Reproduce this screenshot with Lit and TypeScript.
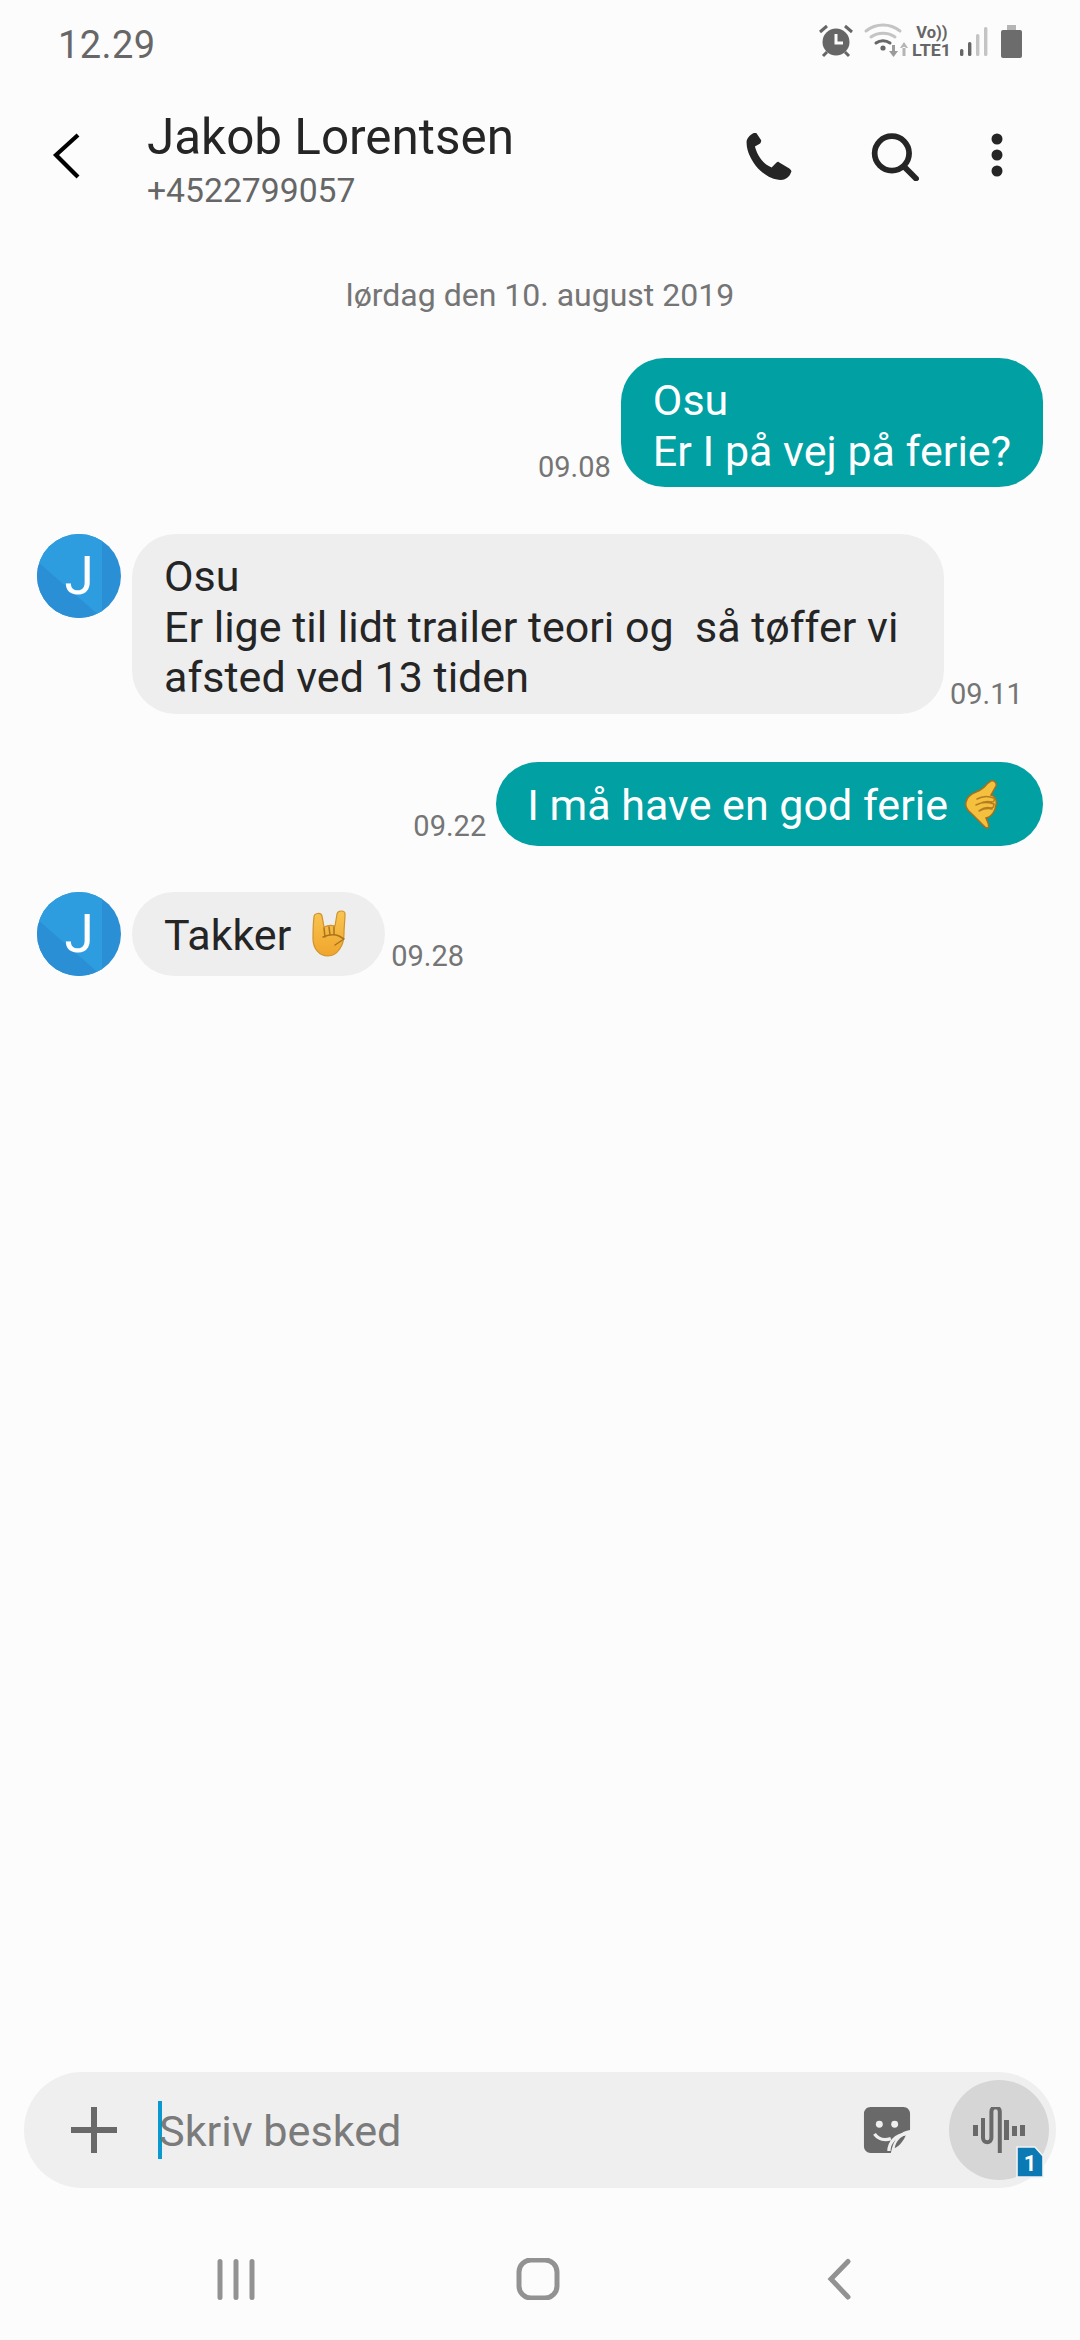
import { LitElement, html, css, svg } from "lit";
import { customElement } from "lit/decorators.js";

const callHand = html`<svg class="emoji call" viewBox="0 0 32 49" width="32" height="49">
  <path d="M26 1c3-1 6 2 5 5l-5 9c4 1 6 5 5 10-1 6-4 10-7 12l-3 1 2 5c1 3 1 5-1 5s-4-3-8-7l-8-8c-4-3-6-7-5-11 1-5 5-8 10-10 5-2 8-4 11-8z" fill="#f6c03f" stroke="#a5701c" stroke-width="1.500"/>
  <path d="M12 19c5-3 12-3 17-1 1 2 0 4-2 4-5-1-10 0-13 2M11 25c5-3 12-3 18-1 0 3-1 4-3 4-4-1-8 0-11 2M14 31c4-2 9-3 13-2" fill="none" stroke="#b27c20" stroke-width="1.500" stroke-linecap="round"/>
</svg>`;

const hornsHand = html`<svg class="emoji horns" viewBox="0 0 34 47" width="34" height="47">
  <defs><linearGradient id="skin" x1="0" y1="0" x2="0" y2="1"><stop offset="0" stop-color="#f8c552"/><stop offset="1" stop-color="#f0a52c"/></linearGradient></defs>
  <path d="M2 7c0-4 7-5 8-1l2 11c4-2 8-2 11-1l2-12c1-4 8-4 8 0 0 7-1 12-1 20 0 12-7 22-16 22C7 46 1 38 1 29 1 21 1 14 2 7z" fill="url(#skin)" stroke="#d2932c" stroke-width="1.200"/>
  <path d="M12 18l1 9M17 17l1 8M22 17l0 7M11 27c5-2 11-3 16-1l5 3-9 6" fill="none" stroke="#a9741c" stroke-width="1.500" stroke-linecap="round" stroke-linejoin="round"/>
</svg>`;

@customElement("app-root")
export class AppRoot extends LitElement {
  static styles = css`
    :host {
      display: block;
      width: 1080px;
      height: 2340px;
      background: #fcfcfc;
      font-family: Roboto, "Liberation Sans", sans-serif;
      color: #252525;
      overflow: hidden;
    }
    .page { display: flex; flex-direction: column; height: 2340px; }

    /* status bar */
    .status { height: 84px; flex: none; display: flex; justify-content: space-between; padding: 23px 54px 0 58px; box-sizing: border-box; }
    .clock { font-size: 38px; line-height: 44px; color: #676767; letter-spacing: 0.4px; }
    .status-icons { display: block; }

    /* header */
    .header { height: 125px; flex: none; display: flex; align-items: flex-start; }
    .back { margin: 47px 0 0 52px; flex: none; }
    .who { margin-left: 65px; flex: 1; padding-top: 26px; }
    .name { font-size: 49.400px; line-height: 54px; }
    .phone { font-size: 33.700px; line-height: 38px; color: #666; margin-top: 8px; }
    .actions { display: flex; flex: none; margin-top: 49px; }
    .actions svg { display: block; }

    /* conversation */
    .thread { flex: 1; display: flex; flex-direction: column; padding: 0 37px; }
    .date { text-align: center; font-size: 32px; line-height: 38px; color: #757575; margin-top: 67px; }
    .row { display: flex; align-items: flex-end; }
    .row.out { justify-content: flex-end; }
    .row.in { align-items: flex-start; }
    .bubble { font-size: 43px; line-height: 50.500px; box-sizing: border-box; padding: 17px 32px 11px; border-radius: 44px; white-space: pre; }
    .out .bubble { background: #00a0a3; color: #fff; }
    .in .bubble { background: #eeeeee; color: #252525; margin-left: 11px; }
    .single { display: flex; align-items: center; height: 84px; padding-top: 4px; padding-bottom: 0; border-radius: 42px; }
    .emoji { flex: none; display: block; }
    .emoji.call { margin-left: 17px; margin-right: 14px; margin-top: -2px; }
    .emoji.horns { margin-left: 21px; margin-right: 6px; margin-top: -4px; }
    .time { font-size: 29px; line-height: 34px; color: #757575; flex: none; }
    .out .time { margin-right: 10px; padding-bottom: 3px; }
    .in .time { margin-left: 6px; align-self: flex-end; padding-bottom: 3px; }
    .avatar { width: 84px; height: 84px; flex: none; display: block; }
    .avatar-wrap { position: relative; width: 84px; height: 84px; flex: none; }
    .avatar-letter { position: absolute; inset: 0; display: flex; align-items: center; justify-content: center; color: #fff; font-size: 53px; font-weight: 400; }

    /* composer */
    .composer { flex: none; margin: 0 24px; height: 116px; border-radius: 58px; background: #efefef; display: flex; align-items: center; }
    .plus { margin-left: 46px; flex: none; display: block; }
    .caret { width: 4px; height: 58px; background: #0a98d0; margin-left: 40px; flex: none; }
    .hint { font-size: 43.200px; color: #7b7b7b; flex: 1; line-height: 58px; margin-left: -3px; padding-top: 3px; }
    .sticker { display: block; flex: none; margin-right: 38px; }
    .mic { width: 100px; height: 100px; border-radius: 50%; background: #d6d6d6; flex: none; margin-right: 7px; display: flex; align-items: center; justify-content: center; position: relative; }
    .sim { position: absolute; right: 5px; bottom: 2px; display: block; }
    .sim-digit { font: 700 22px Roboto, sans-serif; fill: #fff; }

    /* navigation bar */
    .nav { flex: none; height: 152px; display: flex; justify-content: center; align-items: flex-start; padding: 70px 4px 0 0; box-sizing: border-box; }
    .nav svg { display: block; }
    .nav-slot { width: 302px; display: flex; justify-content: center; }

    .sb-text { font: 700 16.500px Roboto, sans-serif; fill: #666; }
  `;

  private avatar() {
    return html`<div class="avatar-wrap">
      <svg class="avatar" viewBox="0 0 84 84">
        <defs><clipPath id="disc"><circle cx="42" cy="42" r="42"/></clipPath></defs>
        <g clip-path="url(#disc)">
          <rect width="84" height="84" fill="#2b8fd6"/>
          <path d="M0 0H65V84L0 27z" fill="#2e9ddf"/>
          <path d="M0 28L60 84H0z" fill="#2b8fd6"/>
        </g>
      </svg>
      <span class="avatar-letter">J</span>
    </div>`;
  }

  render() {
    return html`<div class="page">
      <div class="status">
        <span class="clock">12.29</span>
        <svg class="status-icons" width="210" height="40" viewBox="0 0 210 40">
          ${svg`
          <circle cx="20" cy="19" r="13.500" fill="#666"/>
          <path d="M20 11v9h7" fill="none" stroke="#fcfcfc" stroke-width="3"/>
          <path d="M4 9l7-6M29 3l7 6M7 33l4-4M33 33l-4-4" stroke="#666" stroke-width="3"/>
          <g fill="none" stroke-linecap="round">
            <path d="M50 8c10-8 24-8 34 0" stroke="#c4c4c4" stroke-width="3"/>
            <path d="M55 14c7-5 17-5 24 0" stroke="#c4c4c4" stroke-width="3"/>
            <path d="M60 20c4-3 10-3 14 0" stroke="#666" stroke-width="3"/>
          </g>
          <circle cx="67" cy="25" r="2.600" fill="#666"/>
          <path d="M73 28h9l-4.500 6zM76 22h3v7h-3z" fill="#9b9b9b"/>
          <path d="M84 25h8l-4-6zM86.500 24h3v9h-3z" fill="#b5b5b5"/>
          <text class="sb-text" x="116" y="15" text-anchor="middle">Vo))</text>
          <text class="sb-text" x="96" y="33" textLength="39" lengthAdjust="spacingAndGlyphs">LTE1</text>
          <rect x="144" y="26" width="3.400" height="7" rx="1.500" fill="#666"/>
          <rect x="152" y="19" width="3.400" height="14" rx="1.500" fill="#666"/>
          <rect x="160" y="11" width="3.400" height="22" rx="1.500" fill="#c4c4c4"/>
          <rect x="168" y="4" width="3.400" height="29" rx="1.500" fill="#c4c4c4"/>
          <path d="M191 2h9v5h-9z" fill="#b5b5b5"/>
          <rect x="185" y="7" width="21" height="28" rx="2" fill="#6c6c6c"/>
          `}
        </svg>
      </div>

      <div class="header">
        <svg class="back" width="30" height="50" viewBox="0 0 30 50">
          <path d="M26 4L4 24 26 46" fill="none" stroke="#000" stroke-width="4.200"/>
        </svg>
        <div class="who">
          <div class="name">Jakob Lorentsen</div>
          <div class="phone">+4522799057</div>
        </div>
        <div class="actions">
          <svg width="48" height="48" viewBox="2.500 1 44 46" style="margin-right:78px">
            <path d="M10 1c-4 2-7 5-7 9 0 9 5 18 11 25 7 7 14 11 22 11 4 0 8-3 9-6l1-2c0-1-1-2-2-3l-10-6c-1-1-2 0-3 1l-4 4c-5-2-9-6-11-9s-4-7-5-11l5-3c1-1 1-2 1-3L13 2c-1-2-2-2-3-1z" fill="#252525"/>
          </svg>
          <svg width="48" height="48" viewBox="1 0.500 46 46" style="margin-right:72px">
            <circle cx="21" cy="20" r="16.500" fill="none" stroke="#252525" stroke-width="5.500"/>
            <path d="M32 32l14 14" stroke="#252525" stroke-width="5.500"/>
          </svg>
          <svg width="12" height="46" viewBox="0 0 12 46" style="margin-right:77px">
            <circle cx="6" cy="6" r="5.500" fill="#252525"/>
            <circle cx="6" cy="22" r="5.500" fill="#252525"/>
            <circle cx="6" cy="38" r="5.500" fill="#252525"/>
          </svg>
        </div>
      </div>

      <div class="thread">
        <div class="date">lørdag den 10. august 2019</div>

        <div class="row out" style="margin-top:44px">
          <span class="time">09.08</span>
          <div class="bubble">Osu
Er I på vej på ferie?</div>
        </div>

        <div class="row in" style="margin-top:47px">
          ${this.avatar()}
          <div class="bubble" style="width:812px">Osu
Er lige til lidt trailer teori og  så tøffer vi
afsted ved 13 tiden</div>
          <span class="time">09.11</span>
        </div>

        <div class="row out" style="margin-top:48px">
          <span class="time">09.22</span>
          <div class="bubble single" style="padding-left:31px">I må have en god ferie${callHand}</div>
        </div>

        <div class="row in" style="margin-top:46px">
          ${this.avatar()}
          <div class="bubble single" style="padding-right:33px">Takker${hornsHand}</div>
          <span class="time">09.28</span>
        </div>
      </div>

      <div class="composer">
        <svg class="plus" width="48" height="48" viewBox="0 0 48 48">
          <path d="M24 1v46M1 24h46" stroke="#696969" stroke-width="6"/>
        </svg>
        <span class="caret"></span>
        <span class="hint">Skriv besked</span>
        <svg class="sticker" width="48" height="48" viewBox="0 0 50 50">
          <path d="M8 1h34c4 0 7 3 7 7v17c-9 1-17 8-20 24H8c-4 0-7-3-7-7V8c0-4 3-7 7-7z" fill="#696969"/>
          <path d="M33 44c1-7 6-12 12-14-3 6-6 11-12 14z" fill="#696969"/>
          <circle cx="17" cy="19" r="3.600" fill="#efefef"/>
          <circle cx="33" cy="19" r="3.600" fill="#efefef"/>
          <path d="M12 29c4 6 11 7 17 5M27 47c0-9 7-17 18-18" fill="none" stroke="#efefef" stroke-width="3.400"/>
        </svg>
        <div class="mic">
          <svg width="52" height="47" viewBox="0 0 52 47">
            <rect x="0" y="18" width="5" height="11" fill="#696969"/>
            <path d="M10 11V31a4.200 4.200 0 0 0 8.400 0V4.500a4.200 4.200 0 0 1 8.400 0V46" fill="none" stroke="#696969" stroke-width="4"/>
            <rect x="31" y="13" width="5" height="20" fill="#696969"/>
            <rect x="39" y="19" width="5" height="10" fill="#696969"/>
            <rect x="47" y="18" width="5" height="11" fill="#696969"/>
          </svg>
          <svg class="sim" width="28" height="32" viewBox="0 0 28 32">
            <path d="M1 1h18l8 9v21H1z" fill="#0a79b4" stroke="#f2f2f2" stroke-width="1.600"/>
            <text class="sim-digit" x="14" y="25" text-anchor="middle">1</text>
          </svg>
        </div>
      </div>

      <div class="nav">
        <div class="nav-slot">
          <svg width="38" height="42" viewBox="0 0 38 42">
            <path d="M3 3.500v36M19 3.500v36M35 3.500v36" stroke="#929292" stroke-width="5" stroke-linecap="round"/>
          </svg>
        </div>
        <div class="nav-slot">
          <svg width="44" height="42" viewBox="0 0 44 42">
            <rect x="3" y="2" width="38" height="38" rx="12" fill="none" stroke="#929292" stroke-width="5"/>
          </svg>
        </div>
        <div class="nav-slot">
          <svg width="26" height="42" viewBox="0 0 26 42">
            <path d="M21 3.500L4 21l17 18" fill="none" stroke="#929292" stroke-width="5" stroke-linecap="round"/>
          </svg>
        </div>
      </div>
    </div>`;
  }
}
